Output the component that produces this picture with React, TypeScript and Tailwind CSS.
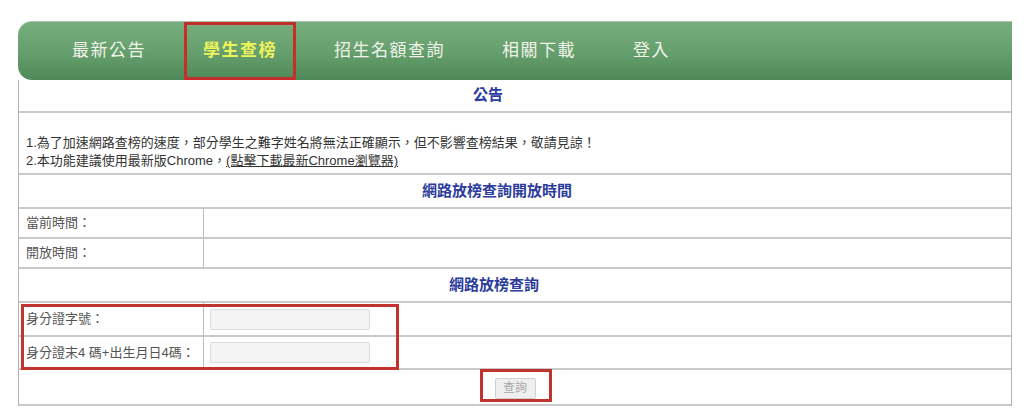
import React from "react";

const font = {
  fontFamily: '"Liberation Sans", "Noto Sans CJK TC", "Noto Sans", sans-serif',
};

function NavItem({ label, active }: { label: string; active?: boolean }) {
  return (
    <div
      className={
        "flex h-full items-center px-[16px] border-[3px] text-[17px] tracking-[1.5px] " +
        (active
          ? "border-[#c3302c] text-[#eef35c] font-bold"
          : "border-transparent text-[#f1f3ea]")
      }
    >
      {label}
    </div>
  );
}

function Row({
  label,
  h,
  children,
}: {
  label: string;
  h: string;
  children?: React.ReactNode;
}) {
  return (
    <div className={"flex border-b-2 border-[#c9c9c9] " + h}>
      <div className="flex w-[185px] shrink-0 items-center border-r border-[#bdbdbd] pl-[7px] text-[13px] text-[#555]">
        {label}
      </div>
      <div className="flex flex-1 items-center pl-[6px]">{children}</div>
    </div>
  );
}

function Header({ text, h, pr }: { text: string; h: string; pr: string }) {
  return (
    <div
      className={
        "flex items-center justify-center border-b-2 border-[#c9c9c9] text-[15px] font-bold text-[#2c3c9c] " +
        h +
        " " +
        pr
      }
    >
      {text}
    </div>
  );
}

export default function App() {
  return (
    <div className="h-[410px] w-full bg-white pl-[18px] pr-[12px] pt-[21px]" style={font}>
      <nav className="flex h-[59px] items-stretch rounded-l-[14px] border-t border-[#a9c3b0] bg-gradient-to-b from-[#78ae7e] via-[#66a06e] to-[#508a59] pl-[35px] gap-[19px]">
        <NavItem label="最新公告" />
        <NavItem label="學生查榜" active />
        <NavItem label="招生名額查詢" />
        <NavItem label="相關下載" />
        <NavItem label="登入" />
      </nav>
      <div className="border-x border-[#b3b3b3]">
        <Header text="公告" h="h-[33px]" pr="pr-[54px]" />
        <div className="h-[62px] border-b-2 border-[#c9c9c9] pl-[7px] pt-[21px] text-[13px] leading-[18px] text-[#333]">
          <div>1.為了加速網路查榜的速度，部分學生之難字姓名將無法正確顯示，但不影響查榜結果，敬請見諒！</div>
          <div>
            2.本功能建議使用最新版Chrome，
            <span className="underline">(點擊下載最新Chrome瀏覽器)</span>
          </div>
        </div>
        <Header text="網路放榜查詢開放時間" h="h-[34px]" pr="pr-[36px]" />
        <Row label="當前時間：" h="h-[30px]" />
        <Row label="開放時間：" h="h-[30px]" />
        <Header text="網路放榜查詢" h="h-[34px]" pr="pr-[42px]" />
        <div className="relative">
          <Row label="身分證字號：" h="h-[34px]">
            <div className="h-[21px] w-[160px] rounded-[2px] border border-[#dcdcdc] bg-[#f4f4f4]" />
          </Row>
          <Row label="身分證末4 碼+出生月日4碼：" h="h-[33px]">
            <div className="h-[21px] w-[160px] rounded-[2px] border border-[#dcdcdc] bg-[#f4f4f4]" />
          </Row>
          <div className="pointer-events-none absolute left-[2px] top-[1px] h-[66px] w-[378px] border-[3px] border-[#c0332f]" />
        </div>
        <div className="flex h-[36px] justify-center border-b-2 border-[#c9c9c9] pt-[5px]">
          <div className="relative h-[21px]">
            <button className="h-[21px] w-[41px] rounded-[2px] border border-[#d0d0d0] bg-[#efefef] text-[12px] leading-[19px] text-[#a8a8a8]">
              查詢
            </button>
            <div className="pointer-events-none absolute left-[-15px] top-[-6px] h-[33px] w-[72px] border-[3px] border-[#c0332f]" />
          </div>
        </div>
      </div>
    </div>
  );
}
